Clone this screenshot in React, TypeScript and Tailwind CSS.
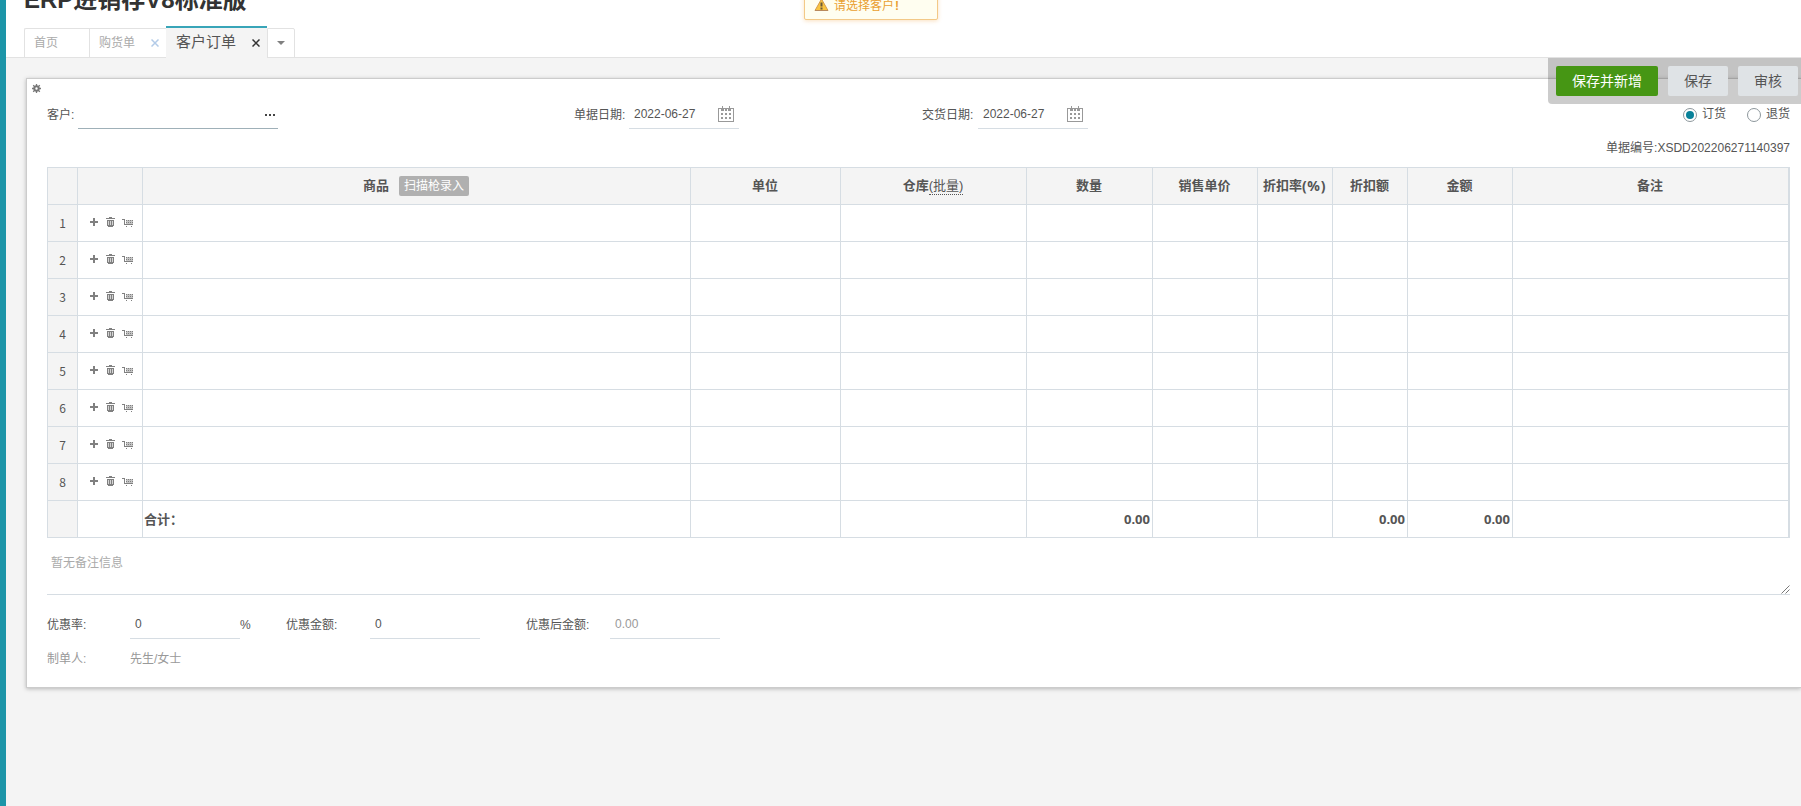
import React from "react";

const ROWS = [1, 2, 3, 4, 5, 6, 7, 8];

const GRID =
  "grid grid-cols-[30px_65px_548px_150px_186px_126px_105px_75px_75px_105px_277px] h-[37px]";
const CELL = "border-r border-b border-[#d6dde3] flex items-center";
const LAST = "border-r-2 border-b border-[#d6dde3] flex items-center";

const PlusIcon = () => (
  <svg width="8" height="8" viewBox="0 0 8 8" fill="#808080" shapeRendering="crispEdges">
    <path d="M3 0h2v3h3v2H5v3H3V5H0V3h3z" />
  </svg>
);

const TrashIcon = () => (
  <svg width="9" height="10" viewBox="0 0 9 10" fill="#808080" shapeRendering="crispEdges">
    <path d="M3 0h3v1h3v1H0V1h3z" />
    <path d="M1 3h7v6H7v1H2V9H1z" />
    <path fill="#d4d4d4" d="M2 4h1v4H2zM4 4h1v4H4zM6 4h1v4H6z" />
  </svg>
);

const CartIcon = () => (
  <svg width="11" height="8" viewBox="0 0 11 8" shapeRendering="crispEdges">
    <path fill="#c4c4c4" d="M4 1h7v4H4z" />
    <path
      fill="#808080"
      d="M0 0h3v1H0zM2 1h1v5H2zM3 5h8v1H3zM4 1h1v1H4zM6 1h1v1H6zM8 1h1v1H8zM10 1h1v1h-1zM4 3h1v1H4zM6 3h1v1H6zM8 3h1v1H8zM10 3h1v1h-1zM4 7h1v1H4zM9 7h1v1H9z"
    />
  </svg>
);

const GearIcon = () => (
  <svg width="9" height="9" viewBox="0 0 9 9" fill="none" stroke="#777">
    <circle cx="4.5" cy="4.5" r="2.2" strokeWidth="2" />
    <path
      strokeWidth="1.3"
      d="M4.5 0v2M4.5 7v2M0 4.5h2M7 4.5h2M1.2 1.2l1.4 1.4M6.4 6.4l1.4 1.4M7.8 1.2L6.4 2.6M2.6 6.4L1.2 7.8"
    />
  </svg>
);

const CalendarIcon = () => (
  <svg width="16" height="16" viewBox="0 0 16 16" shapeRendering="crispEdges">
    <path
      fill="none"
      stroke="#999"
      d="M4.5 0V4.5H5.5V2.5H7.5V4.5H8.5V2.5H10.5V4.5H11.5V0M3.5 4.5V2.5H0.5V15.5H15.5V2.5H12.5V4.5"
    />
    <path fill="#999" d="M3 7h2v2H3zM7 7h2v2H7zM11 7h2v2h-2zM3 11h2v2H3zM7 11h2v2H7zM11 11h2v2h-2z" />
  </svg>
);

const CloseIcon = ({ color }: { color: string }) => (
  <svg width="8" height="8" viewBox="0 0 8 8" stroke={color} strokeWidth="1.5">
    <path d="M0.5 0.5l7 7M7.5 0.5l-7 7" />
  </svg>
);

const WarnIcon = () => (
  <svg width="15" height="14" viewBox="0 0 15 14">
    <path d="M7.5 1L14 12.5H1z" fill="#f9c440" stroke="#d59a4a" strokeLinejoin="round" />
    <path d="M1 12.5h13" stroke="#b98a5e" />
    <path d="M6.5 4.5h2v4h-2zM6.5 9.5h2v2h-2z" fill="#6b5a3a" />
  </svg>
);

const DateField = ({ value }: { value: string }) => (
  <div className="w-[110px] h-7 border-b border-[#d6dde3] flex items-center justify-between px-[5px]">
    <span className="leading-4 pb-0.5">{value}</span>
    <span className="pb-px">
      <CalendarIcon />
    </span>
  </div>
);

const Radio = ({ label, checked }: { label: string; checked?: boolean }) => (
  <label className="flex items-center gap-[5px]">
    <span className="size-3.5 rounded-full border border-[#8d979c] flex items-center justify-center bg-white">
      {checked && <span className="size-2 rounded-full bg-[#088199]" />}
    </span>
    <span className="leading-4 pb-0.5">{label}</span>
  </label>
);

const Header = () => (
  <header className="h-[58px] shrink-0 border-b border-[#e2e2e2] bg-white pl-[18px] flex flex-col justify-between">
    <h1 className="-mt-4 text-2xl leading-8 font-bold text-[#333] whitespace-nowrap">
      ERP进销存V8标准版
    </h1>
    <nav className="-mb-px flex items-end text-[#aaa]">
      <div className="w-[65px] h-[30px] border border-r-0 border-[#e2e2e2] rounded-tl-xs pl-[9px] flex items-center">
        首页
      </div>
      <div className="w-[77px] h-[30px] border border-r-0 border-[#e2e2e2] pl-[9px] pr-[7px] flex items-center justify-between">
        购货单
        <CloseIcon color="#b3cbe8" />
      </div>
      <div className="w-[101px] h-8 border-t-2 border-t-[#38a5b8] bg-[#f4f4f4] pl-2.5 pr-[7px] flex items-center justify-between text-[15px] text-[#555]">
        <span className="pb-0.5">客户订单</span>
        <CloseIcon color="#333" />
      </div>
      <div className="w-7 h-[30px] border border-[#e2e2e2] rounded-tr-xs flex items-center justify-center">
        <svg width="8" height="4" viewBox="0 0 8 4" fill="#808080">
          <path d="M0 0h8L4 4z" />
        </svg>
      </div>
    </nav>
  </header>
);

const OrderTable = () => (
  <div className="mt-[11px] w-[1743px] border-t border-l border-[#d6dde3] text-[13px]">
    <div className={`${GRID} bg-[#f4f4f4] font-bold text-center *:justify-center *:pr-px`}>
      <div className={CELL} />
      <div className={CELL} />
      <div className={CELL}>
        商品
        <span className="ml-2.5 h-5 px-[5px] rounded-xs bg-[#b0b0b0] text-white text-xs leading-5 font-normal">
          扫描枪录入
        </span>
      </div>
      <div className={CELL}>单位</div>
      <div className={CELL}>
        仓库
        <span className="font-normal leading-4 border-b border-dotted border-[#555]">(批量)</span>
      </div>
      <div className={CELL}>数量</div>
      <div className={CELL}>销售单价</div>
      <div className={`${CELL} whitespace-nowrap`}>
        折扣率<span className="font-['Noto_Sans',sans-serif] text-[14px] tracking-[0.7px]">(%)</span>
      </div>
      <div className={CELL}>折扣额</div>
      <div className={CELL}>金额</div>
      <div className={LAST}>备注</div>
    </div>
    {ROWS.map((n) => (
      <div className={GRID} key={n}>
        <div className={`${CELL} justify-center bg-[#f4f4f4] text-xs font-['Noto_Sans_CJK_SC',sans-serif]`}>
          {n}
        </div>
        <div className={`${CELL} pl-3 pb-0.5`}>
          <PlusIcon />
          <span className="ml-2">
            <TrashIcon />
          </span>
          <span className="ml-[7px] mt-0.5">
            <CartIcon />
          </span>
        </div>
        <div className={CELL} />
        <div className={CELL} />
        <div className={CELL} />
        <div className={CELL} />
        <div className={CELL} />
        <div className={CELL} />
        <div className={CELL} />
        <div className={CELL} />
        <div className={LAST} />
      </div>
    ))}
    <div className={`${GRID} font-bold font-['Noto_Sans','Noto_Sans_CJK_SC',sans-serif] *:pt-0.5`}>
      <div className={`${CELL} bg-[#f4f4f4]`} />
      <div className={CELL} />
      <div className={`${CELL} pl-px`}>合计：</div>
      <div className={CELL} />
      <div className={CELL} />
      <div className={`${CELL} justify-end pr-0.5`}>0.00</div>
      <div className={CELL} />
      <div className={CELL} />
      <div className={`${CELL} justify-end pr-0.5`}>0.00</div>
      <div className={`${CELL} justify-end pr-0.5`}>0.00</div>
      <div className={LAST} />
    </div>
  </div>
);

const AmountField = ({ value, muted }: { value: string; muted?: boolean }) => (
  <div
    className={`w-[110px] h-7 border-b border-[#d6dde3] pl-[5px] pb-px flex items-center ${muted ? "text-[#999]" : ""}`}
  >
    {value}
  </div>
);

const App = () => {
  return (
    <div className="relative flex w-full h-[806px] overflow-hidden bg-[#f4f4f4] text-xs text-[#555] font-['Liberation_Sans','Noto_Sans_CJK_SC',sans-serif]">
      <aside className="w-1.5 shrink-0 bg-[#1c95a8]" />
      <div className="flex-1 min-w-0 flex flex-col">
        <Header />
        <main className="mt-5 ml-5 h-[610px] border border-r-0 border-[#ccc] bg-white shadow-[0_1px_4px_rgba(0,0,0,0.25)]">
          <div className="h-[22px] pl-[5px] pt-[5px]">
            <GearIcon />
          </div>
          <div className="pl-5 pr-[11px]">
            <div className="flex h-7 items-center">
              <span className="w-[31px] pb-px">客户:</span>
              <div className="w-[200px] h-7 border-b border-[#9fb0b8] flex items-center justify-end pr-[3px] gap-0.5">
                <i className="size-0.5 bg-[#444]" />
                <i className="size-0.5 bg-[#444]" />
                <i className="size-0.5 bg-[#444]" />
              </div>
              <span className="ml-[296px] w-[55px] pb-px">单据日期:</span>
              <DateField value="2022-06-27" />
              <span className="ml-[183px] w-14 pb-px">交货日期:</span>
              <DateField value="2022-06-27" />
              <div className="ml-auto flex gap-[21px]">
                <Radio label="订货" checked />
                <Radio label="退货" />
              </div>
            </div>
            <div className="h-[27px] flex items-end justify-end leading-4">
              单据编号:XSDD202206271140397
            </div>
            <OrderTable />
            <div className="h-[57px] border-b border-[#d6dde3] pl-1 pt-[17px] flex justify-between text-[#aaa]">
              <span className="leading-4">暂无备注信息</span>
              <svg className="self-end" width="9" height="9" viewBox="0 0 9 9" stroke="#555" strokeWidth="0.8">
                <path d="M0.5 8.5l8-8M4.5 8.5l4-4" />
              </svg>
            </div>
            <div className="mt-4 flex h-7 items-center">
              <span className="w-[83px] pb-px">优惠率:</span>
              <AmountField value="0" />
              <span className="w-[46px] pb-px">%</span>
              <span className="w-[84px] pb-px">优惠金额:</span>
              <AmountField value="0" />
              <span className="ml-[46px] w-[84px] pb-px">优惠后金额:</span>
              <AmountField value="0.00" muted />
            </div>
            <div className="mt-3 flex leading-4 text-[#999]">
              <span className="w-[83px]">制单人:</span>
              <span>先生/女士</span>
            </div>
          </div>
        </main>
      </div>

      {/* message tip */}
      <div className="absolute left-[804px] -top-[10px] w-[134px] h-[30px] rounded-xs border border-[#f3c987] bg-[#fffef0] shadow-[0_1px_4px_rgba(243,180,100,0.4)] pl-[9px] flex items-center gap-[5px] text-[#e9a030]">
        <WarnIcon />
        <span className="pt-px">
          请选择客户<b className="pl-px">!</b>
        </span>
      </div>

      {/* floating toolbar */}
      <div className="absolute right-0 top-[58px] h-[46px] pl-2 pr-[3px] rounded-bl-sm bg-black/20 flex items-center gap-2.5 text-sm">
        <button className="w-[102px] h-[30px] rounded-xs bg-[#469614] text-white">保存并新增</button>
        <button className="w-[60px] h-[30px] rounded-xs bg-[#dfe3e6]">保存</button>
        <button className="w-[60px] h-[30px] rounded-xs bg-[#dfe3e6]">审核</button>
      </div>
    </div>
  );
};

export default App;
